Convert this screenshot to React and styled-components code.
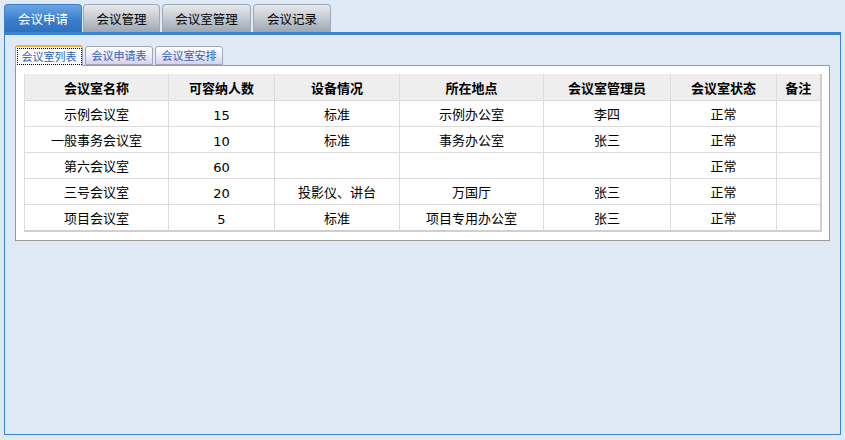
import React, { useState } from "react";
import styled, { createGlobalStyle } from "styled-components";

const GlobalStyle = createGlobalStyle`
  html, body {
    margin: 0;
    padding: 0;
    background: #dfeaf6;
  }
  body {
    font-family: "DejaVu Sans", "Noto Sans CJK SC", sans-serif;
    font-size: 12px;
    color: #000;
  }
`;

const Page = styled.div`
  width: 845px;
  height: 440px;
  box-sizing: border-box;
  padding: 4px 4px 0 4px;
  background: #dfeaf6;
  display: flex;
  flex-direction: column;
`;

const TabBar = styled.div`
  display: flex;
  gap: 1px;
  height: 28px;
`;

const MainTab = styled.div`
  box-sizing: border-box;
  width: ${(p) => p.w}px;
  height: 28px;
  margin-right: ${(p) => p.gap || 0}px;
  display: flex;
  align-items: center;
  justify-content: center;
  font-family: "Noto Sans CJK SC", sans-serif;
  font-size: 12.5px;
  border-radius: 4px 4px 0 0;
  cursor: pointer;
  color: ${(p) => (p.active ? "#fff" : "#000")};
  border: 1px solid ${(p) => (p.active ? "#3f7fc8" : "#a2abb5")};
  border-bottom: none;
  background: ${(p) =>
    p.active
      ? "linear-gradient(#6aa6e6, #3b7fcc 55%, #2f71c0)"
      : "linear-gradient(#e6e9ed, #c4cad1 50%, #9da6b0)"};
`;

const Panel = styled.div`
  box-sizing: border-box;
  width: 837px;
  height: 403px;
  border: 1px solid #3a84d0;
  border-top: 3px solid #3a84d0;
  background: #dfeaf6;
  padding: 10px 10px 0 10px;
`;

const SubTabBar = styled.div`
  display: flex;
  align-items: flex-end;
  height: 20px;
  gap: 2px;
  position: relative;
  z-index: 1;
`;

const SubTab = styled.div`
  box-sizing: border-box;
  width: ${(p) => p.w}px;
  height: ${(p) => (p.active ? 21 : 19)}px;
  margin-bottom: ${(p) => (p.active ? -1 : 0)}px;
  display: flex;
  align-items: center;
  justify-content: center;
  font-family: "Noto Sans CJK SC", sans-serif;
  font-size: 11px;
  color: #2f62b8;
  cursor: pointer;
  border: 1px solid #a0a8b8;
  border-top: ${(p) => (p.active ? "2px solid #f5b23c" : "1px solid #a0a8b8")};
  border-bottom: ${(p) => (p.active ? "none" : "1px solid #a0a8b8")};
  border-radius: 3px 3px 0 0;
  background: ${(p) =>
    p.active ? "#fff" : "linear-gradient(#ffffff, #ecebf7 50%, #d4d3ec)"};
`;

const Focus = styled.span`
  padding: 0 4px;
  line-height: 15px;
  outline: ${(p) => (p.active ? "1px dotted #000" : "none")};
`;

const Box = styled.div`
  box-sizing: border-box;
  width: 815px;
  height: 176px;
  border: 1px solid #999;
  background: #fff;
  padding: 8px 9px 0 8px;
`;

const Table = styled.table`
  width: 796px;
  border-collapse: collapse;
  table-layout: fixed;
  border-left: 1px solid #cfcfcf;
  border-bottom: 2px solid #cfcfcf;
  border-right: 2px solid #cfcfcf;
`;

const Th = styled.th`
  height: 26px;
  padding: 0;
  background: #eeeeee;
  font-family: "Noto Sans CJK SC", sans-serif;
  font-weight: bold;
  font-size: 13px;
  border: 1px solid #dcdcdc;
  border-top: none;
  text-align: center;
`;

const Td = styled.td`
  height: 25px;
  padding: 0;
  font-family: "Noto Sans CJK SC", sans-serif;
  font-size: 13px;
  border: 1px solid #dcdcdc;
  text-align: center;
  vertical-align: middle;
  line-height: 16px;
`;

const Num = styled.span`
  font-family: "DejaVu Sans", sans-serif;
  font-size: 13px;
  position: relative;
  top: 2px;
`;

const mainTabs = [
  { label: "会议申请", w: 78 },
  { label: "会议管理", w: 77, gap: 1 },
  { label: "会议室管理", w: 89, gap: 1 },
  { label: "会议记录", w: 78 },
];

const subTabs = [
  { label: "会议室列表", w: 68 },
  { label: "会议申请表", w: 68 },
  { label: "会议室安排", w: 68 },
];

const cols = [144, 106, 125, 144, 127, 106, 44];
const heads = ["会议室名称", "可容纳人数", "设备情况", "所在地点", "会议室管理员", "会议室状态", "备注"];

const rows = [
  ["示例会议室", "15", "标准", "示例办公室", "李四", "正常", ""],
  ["一般事务会议室", "10", "标准", "事务办公室", "张三", "正常", ""],
  ["第六会议室", "60", "", "", "", "正常", ""],
  ["三号会议室", "20", "投影仪、讲台", "万国厅", "张三", "正常", ""],
  ["项目会议室", "5", "标准", "项目专用办公室", "张三", "正常", ""],
];

export default function App() {
  const [tab, setTab] = useState(0);
  const [sub, setSub] = useState(0);
  return (
    <>
      <GlobalStyle />
      <Page>
        <TabBar>
          {mainTabs.map((t, i) => (
            <MainTab key={t.label} w={t.w} gap={t.gap} active={i === tab} onClick={() => setTab(i)}>
              {t.label}
            </MainTab>
          ))}
        </TabBar>
        <Panel>
          <SubTabBar>
            {subTabs.map((t, i) => (
              <SubTab key={t.label} w={t.w} active={i === sub} onClick={() => setSub(i)}>
                <Focus active={i === sub}>{t.label}</Focus>
              </SubTab>
            ))}
          </SubTabBar>
          <Box>
            <Table>
              <colgroup>
                {cols.map((w, i) => (
                  <col key={i} style={{ width: w }} />
                ))}
              </colgroup>
              <thead>
                <tr>
                  {heads.map((h) => (
                    <Th key={h}>{h}</Th>
                  ))}
                </tr>
              </thead>
              <tbody>
                {rows.map((r, ri) => (
                  <tr key={ri}>
                    {r.map((c, ci) => (
                      <Td key={ci}>{ci === 1 ? <Num>{c}</Num> : c}</Td>
                    ))}
                  </tr>
                ))}
              </tbody>
            </Table>
          </Box>
        </Panel>
      </Page>
    </>
  );
}
